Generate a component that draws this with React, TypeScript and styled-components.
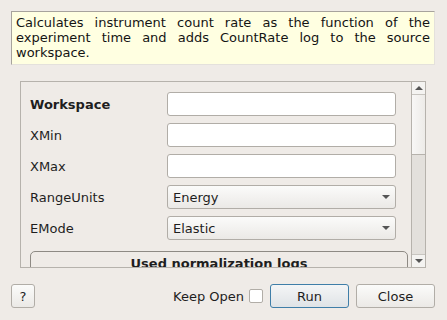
import styled, { createGlobalStyle } from "styled-components";

const GlobalStyle = createGlobalStyle`
  html, body {
    margin: 0;
    padding: 0;
    background: #efebe7;
  }
  * { box-sizing: border-box; }
`;

const Dialog = styled.div`
  width: 447px;
  height: 320px;
  padding: 11px 12px 12px 11px;
  display: flex;
  flex-direction: column;
  font-family: "DejaVu Sans", sans-serif;
  font-size: 13px;
  color: #1e1e1e;
  background: #efebe7;
  overflow: hidden;
`;

const Description = styled.div`
  height: 54px;
  padding: 3px 4px 0 4px;
  background: #ffffe1;
  border-top: 1px solid #a7a39d;
  border-left: 1px solid #a7a39d;
  border-right: 1px solid #e4e1dc;
  border-bottom: 1px solid #e4e1dc;
  line-height: 15px;
  text-align: justify;
  color: #141414;
`;

const Frame = styled.div`
  margin: 16px 9px 0 9px;
  height: 187px;
  border: 1px solid #b6b2ac;
  display: flex;
  overflow: hidden;
`;

const Content = styled.div`
  flex: 1;
  padding: 10px 3px 0 9px;
  display: flex;
  flex-direction: column;
  gap: 7px;
  overflow: hidden;
`;

const Row = styled.div`
  display: flex;
  align-items: center;
  height: 24px;
`;

const Label = styled.div<{ $bold?: boolean }>`
  width: 137px;
  font-weight: ${(p) => (p.$bold ? "bold" : "normal")};
`;

const Input = styled.div`
  width: 229px;
  height: 24px;
  background: #ffffff;
  border: 1px solid #b1ada7;
  border-radius: 3px;
`;

const Combo = styled.div`
  width: 229px;
  height: 24px;
  padding: 0 5px;
  display: flex;
  align-items: center;
  justify-content: space-between;
  background: linear-gradient(#fbfbfa, #ebe9e6);
  border: 1px solid #b1ada7;
  border-radius: 3px;
`;

const Arrow = styled.span<{ $up?: boolean }>`
  width: 0;
  height: 0;
  border-left: 4px solid transparent;
  border-right: 4px solid transparent;
  ${(p) =>
    p.$up ? "border-bottom: 4px solid #555;" : "border-top: 4px solid #555;"}
`;

const Group = styled.div`
  margin-top: 4px;
  margin-right: 0;
  height: 40px;
  border: 1px solid #8e8a84;
  border-radius: 5px 5px 0 0;
  padding-top: 4px;
  text-align: center;
  font-weight: bold;
`;

const ScrollBar = styled.div`
  width: 14px;
  border-left: 1px solid #b6b2ac;
  display: flex;
  flex-direction: column;
`;

const ScrollButton = styled.div`
  height: 13px;
  display: flex;
  align-items: center;
  justify-content: center;
  background: #f4f3f1;
  border-bottom: 1px solid #c8c5c0;
  &:last-child {
    border-bottom: none;
    border-top: 1px solid #c8c5c0;
  }
`;

const Handle = styled.div`
  height: 60px;
  background: linear-gradient(90deg, #f8f7f6, #edebe8);
  border-bottom: 1px solid #b6b2ac;
`;

const Track = styled.div`
  flex: 1;
  background: #e3e0dc;
`;

const Footer = styled.div`
  margin-top: 16px;
  height: 24px;
  display: flex;
  align-items: center;
`;

const Button = styled.div<{ $width: number; $default?: boolean }>`
  width: ${(p) => p.$width}px;
  height: 24px;
  display: flex;
  align-items: center;
  justify-content: center;
  border: 1px solid ${(p) => (p.$default ? "#3f7ea8" : "#b1ada7")};
  border-radius: 3px;
  background: ${(p) =>
    p.$default
      ? "linear-gradient(#f4f5f6, #dfe3e6)"
      : "linear-gradient(#fbfbfa, #ebe9e6)"};
  margin-left: 7px;
`;

const Spacer = styled.div`
  flex: 1;
`;

const KeepOpen = styled.span`
  margin-right: 5px;
`;

const CheckBox = styled.div`
  width: 14px;
  height: 14px;
  background: #fff;
  border: 1px solid #b1ada7;
  border-radius: 2px;
`;

export default function App() {
  return (
    <>
      <GlobalStyle />
      <Dialog>
        <Description>
          Calculates instrument count rate as the function of the experiment
          time and adds CountRate log to the source workspace.
        </Description>
        <Frame>
          <Content>
            <Row>
              <Label $bold>Workspace</Label>
              <Input />
            </Row>
            <Row>
              <Label>XMin</Label>
              <Input />
            </Row>
            <Row>
              <Label>XMax</Label>
              <Input />
            </Row>
            <Row>
              <Label>RangeUnits</Label>
              <Combo>
                Energy
                <Arrow />
              </Combo>
            </Row>
            <Row>
              <Label>EMode</Label>
              <Combo>
                Elastic
                <Arrow />
              </Combo>
            </Row>
            <Group>Used normalization logs</Group>
          </Content>
          <ScrollBar>
            <ScrollButton>
              <Arrow $up />
            </ScrollButton>
            <Handle />
            <Track />
            <ScrollButton>
              <Arrow />
            </ScrollButton>
          </ScrollBar>
        </Frame>
        <Footer>
          <Button $width={24} style={{ marginLeft: 0 }}>?</Button>
          <Spacer />
          <KeepOpen>Keep Open</KeepOpen>
          <CheckBox />
          <Button $width={79} $default>
            Run
          </Button>
          <Button $width={79}>Close</Button>
        </Footer>
      </Dialog>
    </>
  );
}
